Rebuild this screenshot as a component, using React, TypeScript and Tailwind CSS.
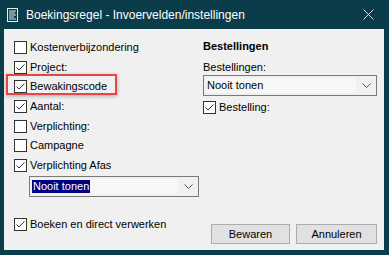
import React from 'react';

const font = { fontFamily: '"Liberation Sans", Arial, sans-serif' };

function Box({ checked }: { checked?: boolean }) {
  return (
    <span className="w-[13px] h-[13px] shrink-0 border border-[#333333] bg-white flex items-center justify-center">
      {checked && (
        <svg width="11" height="11" viewBox="0 0 11 11">
          <polyline points="1.5,5.5 4,8 9.5,2.5" fill="none" stroke="#333333" strokeWidth="1" />
        </svg>
      )}
    </span>
  );
}

function Check({ label, checked }: { label: string; checked?: boolean }) {
  return (
    <div className="flex items-center gap-[3px] h-[19.6px]">
      <Box checked={checked} />
      <span className="leading-[13px]">{label}</span>
    </div>
  );
}

function Chevron() {
  return (
    <svg width="9" height="5" viewBox="0 0 9 5" className="shrink-0">
      <polyline points="0.5,0.5 4.5,4.5 8.5,0.5" fill="none" stroke="#555555" strokeWidth="1" />
    </svg>
  );
}

function Combo({ value, selected, className }: { value: string; selected?: boolean; className: string }) {
  return (
    <div className={`h-[21px] border border-[#7a7a7a] bg-[#f0f0f0] flex items-center ${className}`}>
      <div className="flex-1 h-[15px] ml-[2px] mr-[3px] bg-[#f7f7f7] flex items-center">
        <span className={`leading-[13px] px-[1px] ${selected ? 'bg-[#000080] text-white' : ''}`}>{value}</span>
      </div>
      <div className="w-[14px] mr-[3px] flex justify-center">
        <Chevron />
      </div>
    </div>
  );
}

export default function App() {
  return (
    <div className="w-[389px] h-[255px] bg-[#0a3c4a] flex flex-col text-[11px] text-black" style={font}>
      <div className="h-[29px] flex items-center shrink-0">
        <svg width="11" height="14" viewBox="0 0 11 14" className="ml-[7px]">
          <rect x="0.5" y="0.5" width="10" height="13" fill="none" stroke="#e6eef0" />
          <line x1="2" y1="3" x2="9" y2="3" stroke="#e6eef0" />
          <line x1="2" y1="5" x2="8" y2="5" stroke="#e6eef0" />
          <line x1="2" y1="7" x2="9" y2="7" stroke="#e6eef0" />
          <line x1="2" y1="9" x2="7" y2="9" stroke="#e6eef0" />
          <line x1="2" y1="11" x2="9" y2="11" stroke="#e6eef0" />
        </svg>
        <span className="ml-[8px] text-[12px] text-white">Boekingsregel - Invoervelden/instellingen</span>
        <svg width="11" height="11" viewBox="0 0 11 11" className="ml-auto mr-[15px]">
          <line x1="0.5" y1="0.5" x2="10.5" y2="10.5" stroke="#d8e0e3" />
          <line x1="10.5" y1="0.5" x2="0.5" y2="10.5" stroke="#d8e0e3" />
        </svg>
      </div>

      <div className="relative ml-[4px] mr-[5px] mb-[5px] flex-1 bg-[#f0f0f0] flex flex-col pl-[10px] pr-[7px] pt-[9px]">
        <div className="absolute left-[2px] top-[45px] w-[111px] h-[21px] border-2 border-[#e8454b] shadow-[0_1px_4px_rgba(0,0,0,0.3)]" />

        <div className="flex">
          <div className="w-[189px] flex flex-col">
            <Check label="Kostenverbijzondering" />
            <Check label="Project:" checked />
            <Check label="Bewakingscode" checked />
            <Check label="Aantal:" checked />
            <Check label="Verplichting:" />
            <Check label="Campagne" />
            <Check label="Verplichting Afas" checked />
            <Combo value="Nooit tonen" selected className="ml-[15px] w-[170px] mt-[1px]" />
          </div>

          <div className="flex-1 flex flex-col">
            <div className="mt-[2px] leading-[13px] font-bold">Bestellingen</div>
            <div className="mt-[8px] leading-[13px]">Bestellingen:</div>
            <Combo value="Nooit tonen" className="mt-[1px] w-full" />
            <div className="mt-[5px] flex items-center gap-[3px]">
              <Box checked />
              <span className="leading-[13px]">Bestelling:</span>
            </div>
          </div>
        </div>

        <div className="flex mt-[21px]">
          <div className="flex items-center gap-[3px] h-[13px]">
            <Box checked />
            <span className="leading-[13px]">Boeken en direct verwerken</span>
          </div>
          <div className="ml-auto mt-[6px] flex gap-[6px]">
            <button className="w-[79px] h-[20px] bg-[#e1e1e1] border border-[#adadad] leading-[13px]">Bewaren</button>
            <button className="w-[81px] h-[20px] bg-[#e1e1e1] border border-[#adadad] leading-[13px]">Annuleren</button>
          </div>
        </div>
      </div>
    </div>
  );
}
